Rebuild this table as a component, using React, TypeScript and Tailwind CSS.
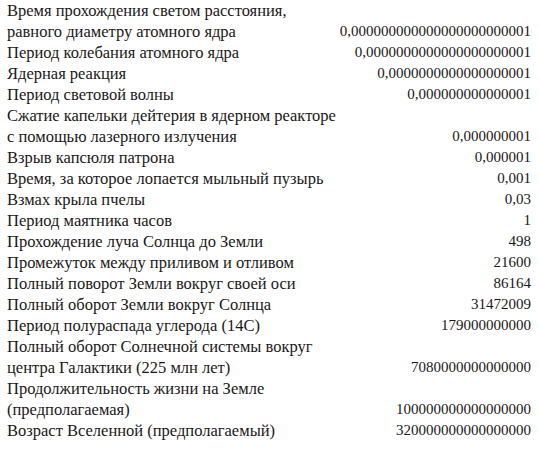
const rows: { label: string[]; value: string }[] = [
  { label: ["Время прохождения светом расстояния,", "равного диаметру атомного ядра"], value: "0," + "0".repeat(23) + "1" },
  { label: ["Период колебания атомного ядра"], value: "0," + "0".repeat(21) + "1" },
  { label: ["Ядерная реакция"], value: "0," + "0".repeat(18) + "1" },
  { label: ["Период световой волны"], value: "0," + "0".repeat(14) + "1" },
  { label: ["Сжатие капельки дейтерия в ядерном реакторе", "с помощью лазерного излучения"], value: "0,000000001" },
  { label: ["Взрыв капсюля патрона"], value: "0,000001" },
  { label: ["Время, за которое лопается мыльный пузырь"], value: "0,001" },
  { label: ["Взмах крыла пчелы"], value: "0,03" },
  { label: ["Период маятника часов"], value: "1" },
  { label: ["Прохождение луча Солнца до Земли"], value: "498" },
  { label: ["Промежуток между приливом и отливом"], value: "21600" },
  { label: ["Полный поворот Земли вокруг своей оси"], value: "86164" },
  { label: ["Полный оборот Земли вокруг Солнца"], value: "31472009" },
  { label: ["Период полураспада углерода (14С)"], value: "179000000000" },
  { label: ["Полный оборот Солнечной системы вокруг", "центра Галактики (225 млн лет)"], value: "7080000000000000" },
  { label: ["Продолжительность жизни на Земле", "(предполагаемая)"], value: "100000000000000000" },
  { label: ["Возраст Вселенной (предполагаемый)"], value: "320000000000000000" },
];

export default function App() {
  return (
    <div className="w-[539px] h-[450px] bg-white overflow-hidden pl-[7px] pr-[8px] leading-[21px] text-[#1a1718] font-['Liberation_Serif','DejaVu_Serif','Times_New_Roman',serif]">
      <div className="grid grid-cols-[1fr_auto] items-end">
        {rows.map((r) => (
          <div key={r.label[0]} className="contents">
            <div className="text-[16.5px]">
              {r.label.map((l) => (
                <div key={l}>{l}</div>
              ))}
            </div>
            <div className="text-right text-[15px]">{r.value}</div>
          </div>
        ))}
      </div>
    </div>
  );
}
